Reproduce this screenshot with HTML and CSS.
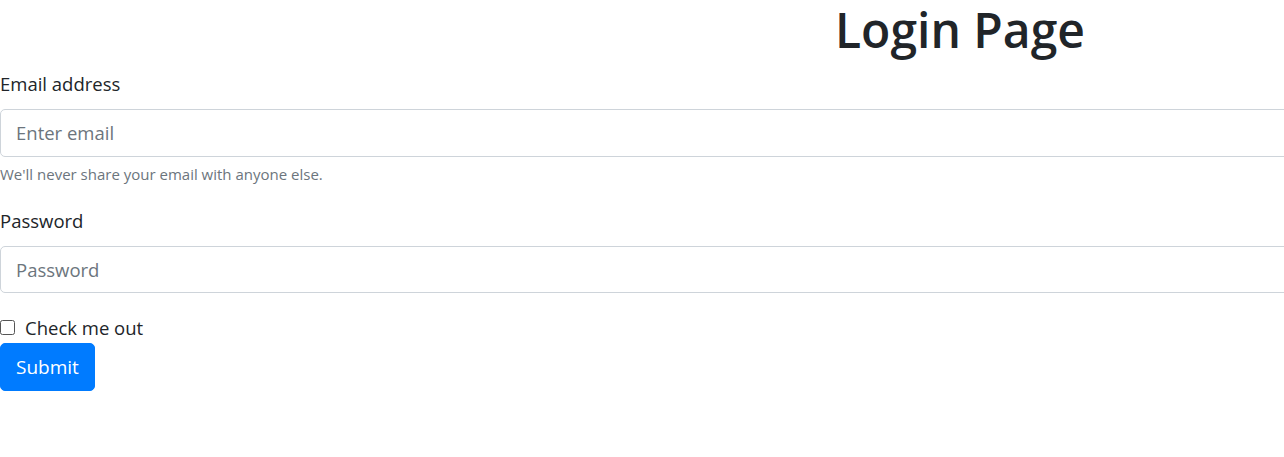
FILE: index.html
```html
<!DOCTYPE html>
<html lang="en">
<head>
<meta charset="utf-8">
<title>Login Page</title>
<link rel="stylesheet" href="styles.css">
</head>
<body>
<div class="page">
  <h1 class="title">Login Page</h1>
  <form class="form">
    <div class="form-group">
      <label class="form-label" for="email">Email address</label>
      <input class="form-control" id="email" type="email" placeholder="Enter email">
      <small class="form-text">We'll never share your email with anyone else.</small>
    </div>
    <div class="form-group">
      <label class="form-label" for="password">Password</label>
      <input class="form-control" id="password" type="password" placeholder="Password">
    </div>
    <div class="form-check">
      <input class="check-input" id="check" type="checkbox">
      <label class="check-label" for="check">Check me out</label>
    </div>
    <button class="btn" type="submit">Submit</button>
  </form>
</div>
</body>
</html>
```
FILE: styles.css
```css
html, body {
  margin: 0;
  padding: 0;
  overflow: hidden;
  background: #fff;
}
body {
  font-family: "Open Sans", "Noto Sans", sans-serif;
  font-size: 18.5px;
  line-height: 30px;
  color: #212529;
}
.page {
  width: 1920px;
}
.title {
  margin: 0 0 9px;
  font-size: 48px;
  line-height: 60px;
  font-weight: 600;
  text-align: center;
}
.form {
  display: flex;
  flex-direction: column;
  align-items: flex-start;
}
.form-group {
  display: flex;
  flex-direction: column;
  align-self: stretch;
  margin-bottom: 20px;
}
.form-label {
  display: block;
  margin-bottom: 10px;
}
.form-control {
  box-sizing: border-box;
  height: 47.5px;
  padding: 7.5px 15px;
  font-family: inherit;
  font-size: 18.5px;
  line-height: 30px;
  color: #495057;
  border: 1px solid #ced4da;
  border-radius: 5px;
  background: #fff;
  outline: none;
}
.form-control::placeholder {
  color: #6c757d;
  opacity: 1;
}
.form-text {
  display: block;
  margin-top: 5px;
  font-size: 15px;
  line-height: 24px;
  color: #6c757d;
}
.form-check {
  display: flex;
  align-items: center;
  height: 30px;
}
.check-input {
  appearance: none;
  -webkit-appearance: none;
  box-sizing: border-box;
  width: 15px;
  height: 15px;
  margin: 0 10px 2px 0;
  border: 1.25px solid #555;
  border-radius: 2.5px;
  background: #fff;
}
.btn {
  box-sizing: border-box;
  height: 47.5px;
  padding: 7.5px 15px;
  font-family: inherit;
  font-size: 19px;
  line-height: 30px;
  color: #fff;
  background: #007bff;
  border: 1px solid #007bff;
  border-radius: 5px;
}
```
